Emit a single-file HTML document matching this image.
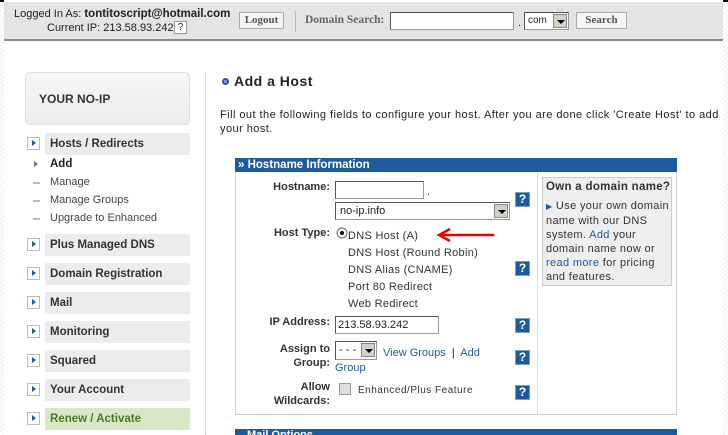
<!DOCTYPE html>
<html><head><meta charset="utf-8"><style>
*{margin:0;padding:0;box-sizing:border-box}
html,body{width:728px;height:435px;overflow:hidden}
body{position:relative;font-family:"Liberation Sans",Arial,sans-serif;font-size:11px;color:#222;
background:repeating-linear-gradient(135deg,#fff 0 2px,#eee 2px 3px)}
.a{position:absolute;white-space:nowrap}
.page{position:absolute;left:4px;top:0;width:719px;height:435px;background:#fff}
.top{position:absolute;left:4px;top:2px;width:719px;height:39px;background:#e4e4e4;border-bottom:2px solid #8a8a8a}
.btn{position:absolute;height:17px;border:1px solid #aaa;background:#f4f4f4;font-family:"Liberation Serif",serif;font-weight:bold;color:#555;font-size:11px;text-align:center;line-height:15px}
.inp{position:absolute;background:#fff;border:1px solid #999;border-top-color:#555;border-left-color:#555}
.dd{position:absolute;width:14px;height:14px;background:#d4d0c8;border:1px solid #888;right:1px;top:1px}
.dd:after{content:"";position:absolute;left:3px;top:5px;border:4px solid transparent;border-top:4px solid #000;border-bottom:0}
.ico{position:absolute;left:27px;width:13px;height:13px;border:1px solid #bbb;background:#fff}
.ico:after{content:"";position:absolute;left:4px;top:2px;border:3px solid transparent;border-left:4px solid #1e5aa0;border-right:0}
.bar{position:absolute;left:45px;width:145px;height:22px;background:#ececec;font-weight:bold;font-size:11.5px;padding-left:5px;line-height:22px;color:#333}
.sub{position:absolute;left:50px;font-size:11px;color:#444}
.dash{position:absolute;left:33px;width:7px;height:2px;background:#bbb}
.help{position:absolute;left:515px;width:15px;height:15px;background:#1e5aa0;border:1px solid #7a9cc6;color:#fff;font-weight:bold;font-size:12px;text-align:center;line-height:13px}
.lbl{position:absolute;right:398px;font-weight:bold;font-size:11px;color:#333;text-align:right}
.opt{position:absolute;left:348px;font-size:11px;color:#333;letter-spacing:.3px}
a{color:#1e5aa0;text-decoration:none}
</style></head><body>
<div style="position:absolute;left:0;top:0;width:728px;height:2px;background:#111"></div>
<div class="page"></div>
<div class="top"></div>
<div class="a" style="left:14px;top:8px;font-size:11px">Logged In As: <b style="font-size:11.5px">tontitoscript@hotmail.com</b></div>
<div class="a" style="left:47px;top:22px;font-size:11px">Current IP: 213.58.93.242</div>
<div class="a" style="left:174px;top:21px;width:13px;height:13px;border:1px solid #999;background:#fff;font-size:10px;text-align:center;line-height:11px">?</div>
<div class="btn" style="left:239px;top:12px;width:45px">Logout</div>
<div style="position:absolute;left:295px;top:11px;width:1px;height:21px;background:#bbb"></div>
<div class="a" style="left:305px;top:14px;font-family:'Liberation Serif',serif;font-weight:bold;color:#666;font-size:11.5px">Domain Search:</div>
<div class="inp" style="left:390px;top:12px;width:124px;height:18px"></div>
<div class="a" style="left:518px;top:17px">.</div>
<div class="inp" style="left:524px;top:12px;width:45px;height:18px;font-size:10px;padding:2px 0 0 3px">com<div class="dd"></div></div>
<div class="btn" style="left:576px;top:12px;width:51px">Search</div>

<div style="position:absolute;left:25px;top:72px;width:165px;height:53px;border:1px solid #ddd;border-radius:5px;background:linear-gradient(#f6f6f6,#ededed)"></div>
<div class="a" style="left:39px;top:92px;font-weight:bold;font-size:12px;color:#333">YOUR NO-IP</div>
<div style="position:absolute;left:205px;top:72px;height:363px;border-left:1px dotted #bbb"></div>

<div class="ico" style="top:137px"></div><div class="bar" style="top:133px">Hosts / Redirects</div>
<div class="a" style="left:34px;top:161px;border:3px solid transparent;border-left:4px solid #777;border-right:0"></div>
<div class="sub" style="top:158px;font-weight:bold;font-size:11.5px;color:#222">Add</div>
<div class="dash" style="top:182px"></div><div class="sub" style="top:176px">Manage</div>
<div class="dash" style="top:200px"></div><div class="sub" style="top:194px">Manage Groups</div>
<div class="dash" style="top:218px"></div><div class="sub" style="top:212px">Upgrade to Enhanced</div>
<div class="ico" style="top:238px"></div><div class="bar" style="top:234px">Plus Managed DNS</div>
<div class="ico" style="top:267px"></div><div class="bar" style="top:263px">Domain Registration</div>
<div class="ico" style="top:296px"></div><div class="bar" style="top:292px">Mail</div>
<div class="ico" style="top:325px"></div><div class="bar" style="top:321px">Monitoring</div>
<div class="ico" style="top:354px"></div><div class="bar" style="top:350px">Squared</div>
<div class="ico" style="top:383px"></div><div class="bar" style="top:379px">Your Account</div>
<div class="ico" style="top:412px"></div><div class="bar" style="top:408px;background:#d8e8c6;color:#4a7a2a">Renew / Activate</div>

<div class="a" style="left:222px;top:78px;width:7px;height:7px;border-radius:50%;border:2px solid #1e5aa0;background:#9ab"></div>
<div class="a" style="left:234px;top:73px;font-weight:bold;font-size:14px;color:#222;letter-spacing:.5px">Add a Host</div>
<div class="a" style="left:220px;top:108px;font-size:11px;line-height:14px;white-space:normal;width:505px;letter-spacing:.45px">Fill out the following fields to configure your host. After you are done click 'Create Host' to add your host.</div>

<div style="position:absolute;left:235px;top:158px;width:442px;height:257px;border:1px solid #ccc"></div>
<div class="a" style="left:235px;top:158px;width:442px;height:14px;background:#1e5aa0;color:#fff;font-weight:bold;font-size:11.5px;line-height:14px;padding-left:3px">» Hostname Information</div>
<div style="position:absolute;left:537px;top:172px;width:1px;height:243px;background:#ddd"></div>
<div style="position:absolute;left:542px;top:177px;width:130px;height:109px;border:1px solid #ccc;background:#eee"></div>
<div class="a" style="left:546px;top:181px;font-weight:bold;font-size:11.5px;color:#333;letter-spacing:.3px">Own a domain name?</div>
<div class="a" style="left:546px;top:199px;font-size:11px;line-height:14px;white-space:normal;width:126px;color:#333;letter-spacing:.35px"><span style="color:#1e5aa0;font-size:8px">▶</span> Use your own domain name with our DNS system. <a>Add</a> your domain name now or <a>read more</a> for pricing and features.</div>

<div class="lbl" style="top:181px">Hostname:</div>
<div class="inp" style="left:335px;top:181px;width:89px;height:18px"></div>
<div class="a" style="left:427px;top:186px">.</div>
<div class="inp" style="left:335px;top:202px;width:175px;height:18px;padding:2px 0 0 4px;font-size:11px">no-ip.info<div class="dd"></div></div>
<div class="help" style="top:192px">?</div>
<div class="lbl" style="top:227px">Host Type:</div>
<svg class="a" style="left:336px;top:227px" width="12" height="12"><circle cx="6" cy="6" r="5" fill="#fff" stroke="#666"/><circle cx="6" cy="6" r="2" fill="#000"/></svg>
<div class="opt" style="top:230px">DNS Host (A)</div>
<svg class="a" style="left:436px;top:227px" width="60" height="16"><path d="M58 8H6" stroke="#e00" stroke-width="2.5"/><path d="M14 2L3 8l11 6" fill="none" stroke="#e00" stroke-width="2.5"/></svg>
<div class="opt" style="top:247px">DNS Host (Round Robin)</div>
<div class="opt" style="top:264px">DNS Alias (CNAME)</div>
<div class="help" style="top:261px">?</div>
<div class="opt" style="top:281px">Port 80 Redirect</div>
<div class="opt" style="top:298px">Web Redirect</div>
<div class="lbl" style="top:316px">IP Address:</div>
<div class="inp" style="left:335px;top:316px;width:104px;height:18px;padding:2px 0 0 2px;font-size:11px">213.58.93.242</div>
<div class="help" style="top:318px">?</div>
<div class="lbl" style="top:342px;line-height:14px">Assign to<br>Group:</div>
<div class="inp" style="left:335px;top:341px;width:42px;height:19px;padding:2px 0 0 3px">- - -<div class="dd"></div></div>
<div class="a" style="left:383px;top:347px"><a>View Groups</a> &nbsp;|&nbsp; <a>Add</a></div>
<div class="a" style="left:335px;top:362px"><a>Group</a></div>
<div class="help" style="top:350px">?</div>
<div class="lbl" style="top:380px;line-height:14px">Allow<br>Wildcards:</div>
<div class="a" style="left:339px;top:383px;width:12px;height:12px;border:1px solid #999;background:#ddd"></div>
<div class="a" style="left:358px;top:385px;font-size:10px;letter-spacing:.5px;color:#333">Enhanced/Plus Feature</div>
<div class="help" style="top:385px">?</div>
<div class="a" style="left:235px;top:429px;width:442px;height:10px;background:#1e5aa0;color:#fff;font-weight:bold;padding-left:12px;line-height:12px">Mail Options</div>
</body></html>
